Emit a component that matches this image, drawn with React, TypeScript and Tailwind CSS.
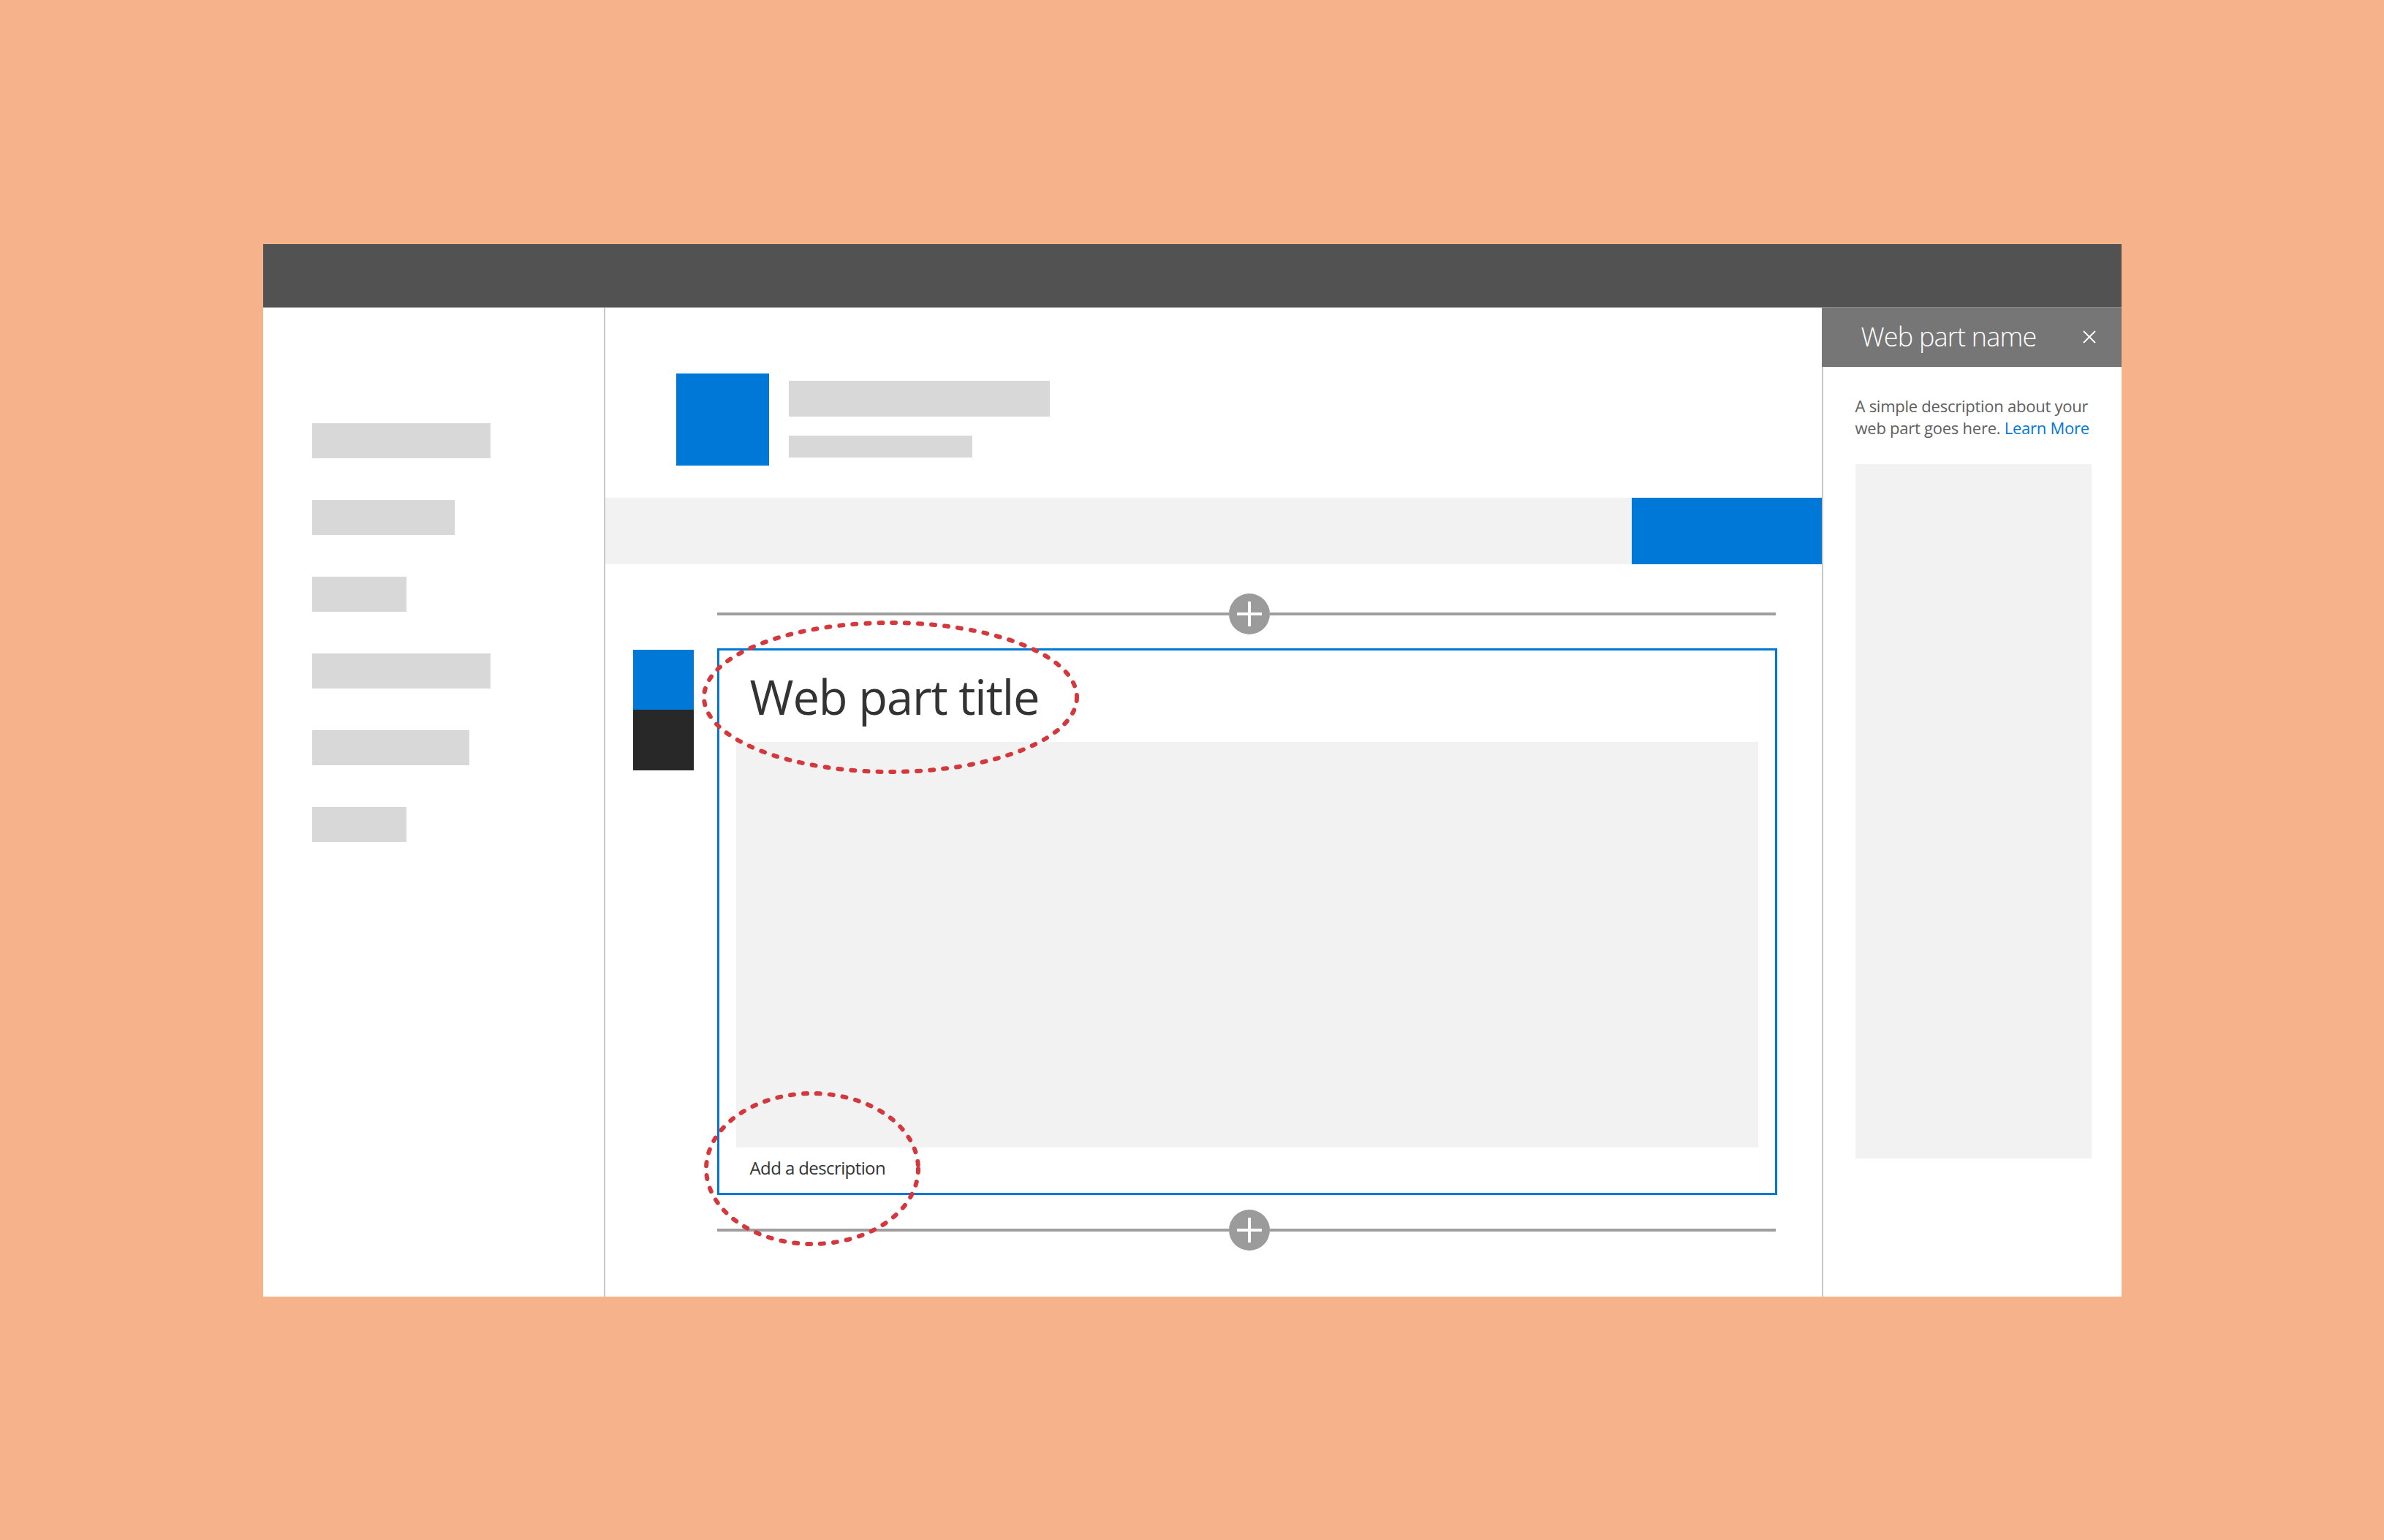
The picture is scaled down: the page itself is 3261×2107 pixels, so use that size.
import React from "react";

const navWidths = ["w-[244px]", "w-[195px]", "w-[129px]", "w-[244px]", "w-[215px]", "w-[129px]"];

function AddRow() {
  return (
    <div className="flex h-[56px] w-[1448px] items-center">
      <div className="h-[4px] w-[700px] bg-[#9e9e9e]" />
      <div className="flex h-[56px] w-[56px] shrink-0 items-center justify-center rounded-full bg-[#9b9b9b]">
        <svg width="34" height="34" viewBox="0 0 34 34">
          <line x1="17" y1="0" x2="17" y2="34" stroke="#ffffff" strokeWidth="4" />
          <line x1="0" y1="17" x2="34" y2="17" stroke="#ffffff" strokeWidth="4" />
        </svg>
      </div>
      <div className="h-[4px] flex-1 bg-[#9e9e9e]" />
    </div>
  );
}

export default function App() {
  return (
    <div className="flex h-[2107px] w-full items-center justify-center bg-[#f6b28a] font-['Open_Sans',sans-serif]">
      <div className="relative flex h-[1440px] w-[2542px] flex-col bg-white">
        {/* top bar */}
        <div className="h-[87px] shrink-0 border-b border-[#8c8c8c] bg-[#525252]" />

        <div className="flex flex-1">
          {/* left nav */}
          <nav className="flex w-[468px] shrink-0 flex-col gap-[57px] border-r-2 border-[#c8c8c8] pl-[67px] pt-[158px]">
            {navWidths.map((w, i) => (
              <div key={i} className={`h-[48px] bg-[#d8d8d8] ${w}`} />
            ))}
          </nav>

          {/* main canvas */}
          <main className="flex flex-1 flex-col">
            <div className="flex gap-[27px] pl-[97px] pt-[90px]">
              <div className="h-[126px] w-[127px] bg-[#0078d7]" />
              <div className="flex flex-col pt-[10px]">
                <div className="h-[49px] w-[357px] bg-[#d8d8d8]" />
                <div className="mt-[26px] h-[30px] w-[251px] bg-[#d8d8d8]" />
              </div>
            </div>

            <div className="mt-[44px] flex h-[91px] justify-end bg-[#f2f2f2]">
              <div className="w-[260px] bg-[#0078d7]" />
            </div>

            <div className="mt-[40px] flex flex-col pl-[38px]">
              <div className="ml-[115px]">
                <AddRow />
              </div>
              <div className="mt-[19px] flex gap-[32px]">
                <div className="mt-[2px] flex w-[83px] flex-col">
                  <div className="h-[82px] bg-[#0078d7]" />
                  <div className="h-[83px] bg-[#282828]" />
                </div>
                <div className="flex h-[748px] w-[1450px] flex-col border-[3px] border-[#0078d7]">
                  <div className="mt-[31px] h-[65px] whitespace-nowrap pl-[42px] text-[65px] leading-[65px] tracking-[-1.1px] text-[#333333]">
                    Web part title
                  </div>
                  <div className="mx-[23px] mt-[29px] h-[555px] bg-[#f2f2f2]" />
                  <div className="mt-[16px] whitespace-nowrap pl-[42px] text-[24px] leading-[24px] tracking-[-0.6px] text-[#333333]">
                    Add a description
                  </div>
                </div>
              </div>
              <div className="ml-[115px] mt-[20px]">
                <AddRow />
              </div>
            </div>
          </main>

          {/* property pane */}
          <aside className="flex w-[410px] shrink-0 flex-col">
            <div className="flex h-[81px] items-center justify-between bg-[#767676] pl-[54px] pr-[35px]">
              <span className="whitespace-nowrap text-[36px] font-light leading-[38px] tracking-[-0.8px] text-white">Web part name</span>
              <svg width="18" height="18" viewBox="0 0 18 18">
                <line x1="1" y1="1" x2="17" y2="17" stroke="#ffffff" strokeWidth="1.8" />
                <line x1="17" y1="1" x2="1" y2="17" stroke="#ffffff" strokeWidth="1.8" />
              </svg>
            </div>
            <div className="flex flex-1 flex-col border-l-2 border-[#c8c8c8] pl-[44px] pr-[40px] pt-[38px]">
              <p className="whitespace-nowrap text-[22px] leading-[30px] tracking-[-0.25px] text-[#5e5e5e]">
                A simple description about your
                <br />
                web part goes here. <span className="text-[#0078d7]">Learn More</span>
              </p>
              <div className="mt-[35px] h-[950px] w-[323px] bg-[#f2f2f2]" />
            </div>
          </aside>
        </div>

        {/* annotation ellipses */}
        <svg className="pointer-events-none absolute left-0 top-0" width="2542" height="1440" viewBox="0 0 2542 1440">
          <ellipse cx="858" cy="620" rx="255" ry="102" fill="none" stroke="#d4383c" strokeWidth="6" strokeDasharray="5 13" strokeLinecap="round" />
          <ellipse cx="751" cy="1265" rx="145" ry="103" fill="none" stroke="#d4383c" strokeWidth="6" strokeDasharray="5 13" strokeLinecap="round" />
        </svg>
      </div>
    </div>
  );
}
